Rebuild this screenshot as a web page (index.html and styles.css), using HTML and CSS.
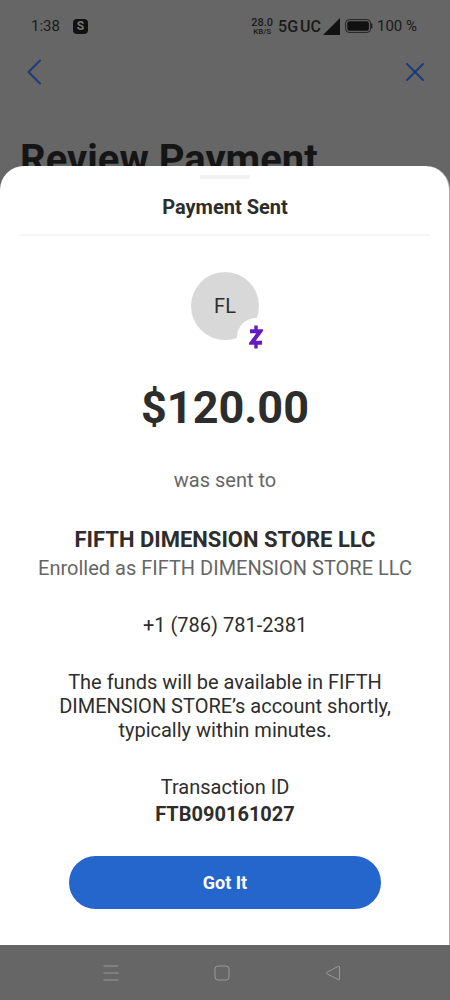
FILE: index.html
```html
<!DOCTYPE html>
<html lang="en">
<head>
<meta charset="utf-8">
<meta name="viewport" content="width=device-width, initial-scale=1">
<title>Payment Sent</title>
<link rel="stylesheet" href="styles.css">
</head>
<body>
<div class="screen">
  <div class="status">
    <span class="time">1:38</span>
    <span class="app-badge">S</span>
    <span class="speed"><b class="rate">28.0</b><b class="unit">KB/S</b></span>
    <span class="network"><span>5G</span><span>UC</span></span>
    <svg class="signal" width="17" height="17" viewBox="0 0 17 17" aria-hidden="true"><path d="M17 0v17H0z" fill="#111"/></svg>
    <svg class="battery" width="28" height="14" viewBox="0 0 28 14" aria-hidden="true"><rect x=".6" y=".6" width="25" height="12.8" rx="3.5" fill="none" stroke="#222" stroke-width="1"/><rect x="2.3" y="2.3" width="21.6" height="9.4" rx="2" fill="#111"/><path d="M26.6 4.5v5" stroke="#222" stroke-width="1.5"/></svg>
    <span class="percent">100 %</span>
  </div>
  <header class="topbar">
    <button class="icon-button" aria-label="Back"><svg width="16" height="26" viewBox="0 0 16 26"><path d="M14 1.500 2.500 13 14 24.500" fill="none" stroke="#1b3d75" stroke-width="2" stroke-linecap="round" stroke-linejoin="round"/></svg></button>
    <button class="icon-button" aria-label="Close"><svg width="18" height="18" viewBox="0 0 18 18"><path d="M1 1l16 16M17 1L1 17" stroke="#1b3d75" stroke-width="2" stroke-linecap="round"/></svg></button>
  </header>
  <h1 class="page-title">Review Payment</h1>

  <main class="sheet">
    <div class="handle"></div>
    <h2 class="sheet-title">Payment Sent</h2>
    <div class="content">
      <div class="avatar">FL
        <span class="badge"><svg width="14" height="24" viewBox="0 0 14 24" role="img" aria-label="Zelle"><path d="M7 .5v5M7 18.500v5" stroke="#641bbf" stroke-width="3.400"/><path d="M1 6.200h10.300L2.700 17.800H13" fill="none" stroke="#641bbf" stroke-width="4"/></svg></span>
      </div>
      <p class="amount">$120.00</p>
      <p class="muted sent-to">was sent to</p>
      <p class="recipient">FIFTH DIMENSION STORE LLC</p>
      <p class="muted enrolled">Enrolled as FIFTH DIMENSION STORE LLC</p>
      <p class="phone">+1 (786) 781-2381</p>
      <p class="note">The funds will be available in FIFTH DIMENSION STORE’s account shortly, typically within minutes.</p>
      <p class="label">Transaction ID</p>
      <p class="transaction">FTB090161027</p>
      <button class="primary">Got It</button>
    </div>
  </main>

  <nav class="system-nav">
    <button class="icon-button" aria-label="Recent apps"><svg width="16" height="16" viewBox="0 0 16 16"><path d="M.5 1h15M.5 8h15M.5 15h15" stroke="#999" stroke-width="1"/></svg></button>
    <button class="icon-button" aria-label="Home"><svg width="16" height="16" viewBox="0 0 16 16"><rect x="1" y="1" width="14" height="14" rx="3" fill="none" stroke="#999"/></svg></button>
    <button class="icon-button" aria-label="Back to previous screen"><svg width="16" height="16" viewBox="0 0 16 16"><path d="M14.500 2v12q0 1.200-1.200.6L1.700 8.700q-1-.7 0-1.400L13.300 1.400q1.200-.6 1.200.6z" fill="none" stroke="#999"/></svg></button>
  </nav>
</div>
</body>
</html>
```

FILE: styles.css
```css
* {
  box-sizing: border-box;
}

body {
  margin: 0;
  background: #666;
  color: #2d2d2d;
  font-family: Roboto, sans-serif;
}

h1, h2, p {
  margin: 0;
}

.screen {
  display: flex;
  flex-direction: column;
  min-height: 100vh;
}

.status {
  display: flex;
  align-items: center;
  height: 52px;
  padding: 0 33px 0 31px;
  color: #1a1a1a;
}

.time {
  font-size: 15px;
}

.app-badge {
  width: 15px;
  height: 15px;
  margin-left: 13px;
  border-radius: 4px;
  background: #111;
  color: #777;
  font-size: 12px;
  font-weight: 700;
  line-height: 15px;
  text-align: center;
}

.speed {
  display: flex;
  flex-direction: column;
  align-items: center;
  margin-left: auto;
}

.rate {
  font-size: 11px;
  font-weight: 500;
  line-height: 11px;
}

.unit {
  font-size: 8px;
  font-weight: 500;
  line-height: 8px;
}

.network {
  display: flex;
  gap: 2px;
  margin: 0 2px 0 5px;
  font-size: 16px;
  font-weight: 500;
}

.battery {
  margin: 0 4px 0 5px;
}

.percent {
  font-size: 15px;
}

.icon-button {
  display: flex;
  padding: 0;
  border: 0;
  background: none;
}

.topbar {
  display: flex;
  align-items: center;
  justify-content: space-between;
  height: 40px;
  padding: 0 26px;
}

.page-title {
  margin-top: 44px;
  padding: 0 20px;
  color: #151515;
  font-size: 40px;
  line-height: 48px;
}

.sheet {
  position: relative;
  display: flex;
  flex: 1;
  flex-direction: column;
  margin-top: -18px;
  padding: 0 19px 0 20px;
  border-right: 1px solid #aaa;
  border-radius: 24px 24px 0 0;
  background: #fff;
  text-align: center;
}

.handle {
  width: 50px;
  height: 4px;
  margin: 9px auto 0;
  background: #f3f3f3;
}

.sheet-title {
  padding: 16px 0 15px;
  border-bottom: 2px solid #f6f6f6;
  font-size: 20px;
  font-weight: 700;
  line-height: 24px;
}

.content {
  display: flex;
  flex-direction: column;
  align-items: center;
  padding: 36px 0 35px;
  font-size: 20px;
  line-height: 24px;
}

.avatar {
  position: relative;
  width: 68px;
  height: 68px;
  border-radius: 50%;
  background: #d8d8d8;
  line-height: 68px;
}

.badge {
  position: absolute;
  right: -16px;
  bottom: -16px;
  display: flex;
  align-items: center;
  justify-content: center;
  width: 38px;
  height: 38px;
  border-radius: 50%;
  background: #fff;
}

.amount {
  margin-top: 40px;
  font-size: 45px;
  font-weight: 700;
  line-height: 56px;
}

.muted {
  color: #666;
}

.sent-to {
  margin-top: 32px;
}

.recipient {
  margin-top: 36px;
  font-size: 22px;
  font-weight: 700;
}

.enrolled {
  margin-top: 4px;
}

.phone,
.note {
  margin-top: 33px;
}

.note {
  max-width: 340px;
}

.label {
  margin-top: 33px;
}

.transaction {
  margin-top: 3px;
  font-weight: 700;
}

.primary {
  width: 76%;
  height: 53px;
  margin-top: 30px;
  border: 0;
  border-radius: 27px;
  background: #2466cb;
  color: #fff;
  font-family: inherit;
  font-size: 18px;
  font-weight: 700;
}

.system-nav {
  display: flex;
  align-items: center;
  justify-content: space-between;
  height: 55px;
  padding: 0 109px 0 103px;
}
```
